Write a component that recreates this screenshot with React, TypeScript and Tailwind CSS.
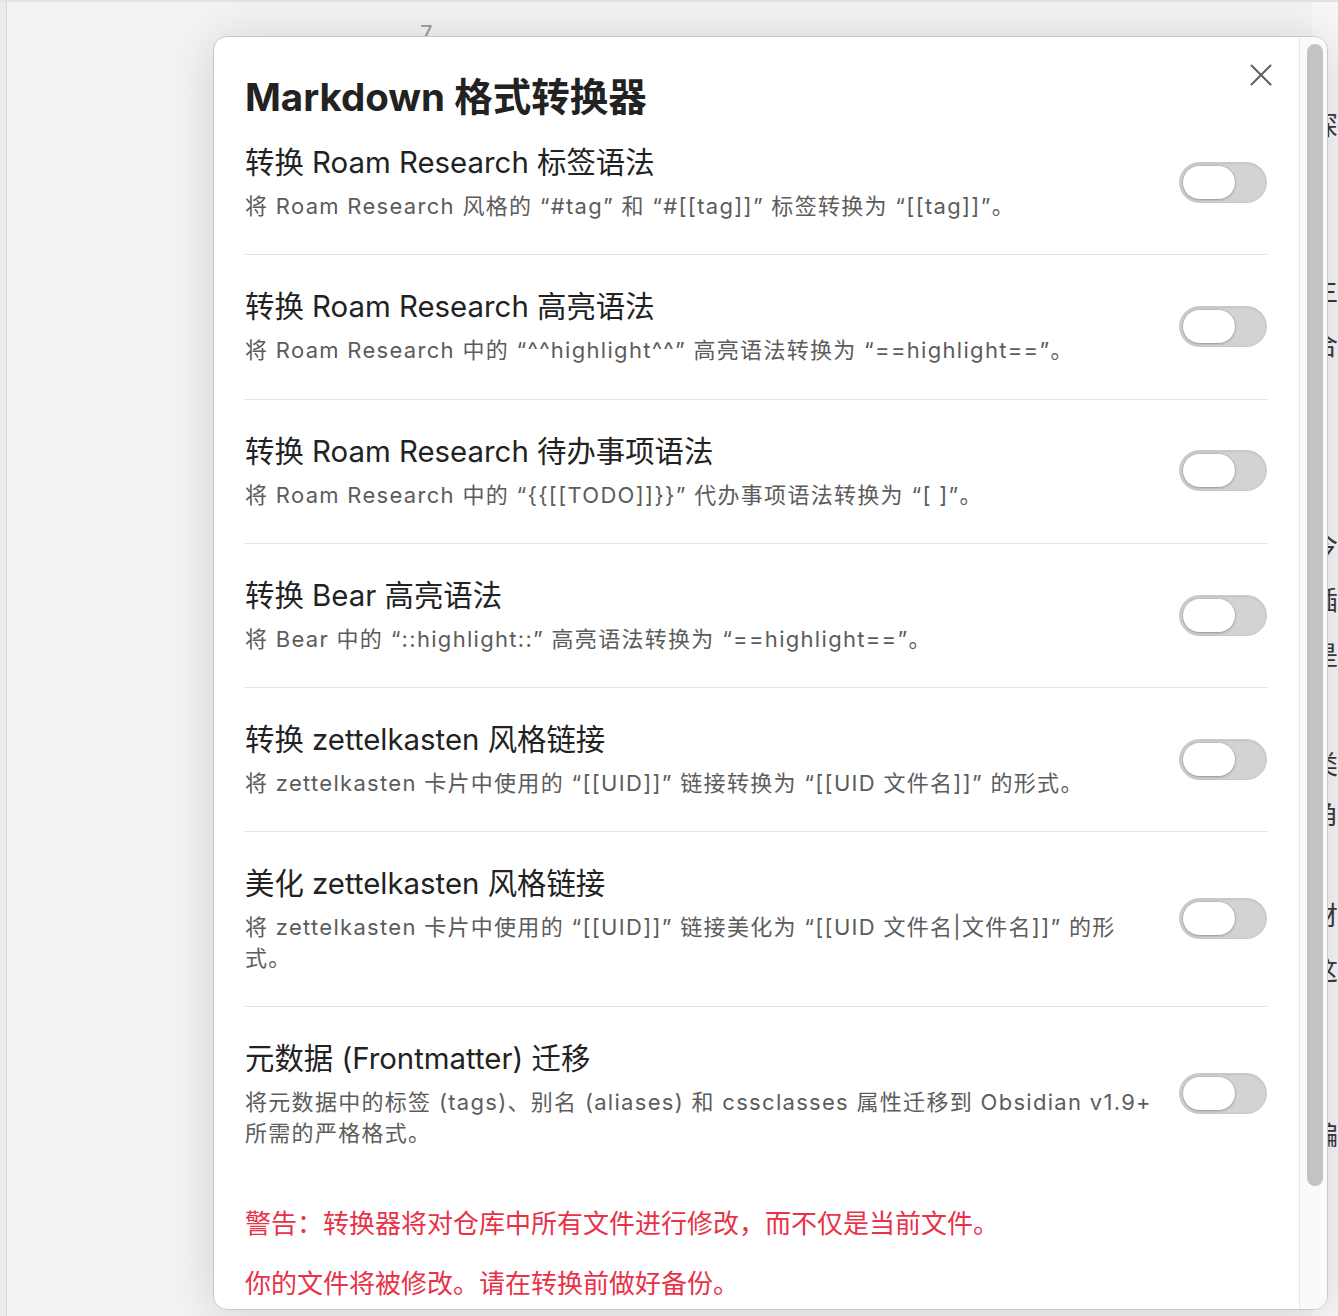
import React from "react";

const rows: { name: string; desc: string[] }[] = [
  { name: "转换 Roam Research 标签语法", desc: ["将 Roam Research 风格的 “#tag” 和 “#[[tag]]” 标签转换为 “[[tag]]”。"] },
  { name: "转换 Roam Research 高亮语法", desc: ["将 Roam Research 中的 “^^highlight^^” 高亮语法转换为 “==highlight==”。"] },
  { name: "转换 Roam Research 待办事项语法", desc: ["将 Roam Research 中的 “{{[[TODO]]}}” 代办事项语法转换为 “[ ]”。"] },
  { name: "转换 Bear 高亮语法", desc: ["将 Bear 中的 “::highlight::” 高亮语法转换为 “==highlight==”。"] },
  { name: "转换 zettelkasten 风格链接", desc: ["将 zettelkasten 卡片中使用的 “[[UID]]” 链接转换为 “[[UID 文件名]]” 的形式。"] },
  { name: "美化 zettelkasten 风格链接", desc: ["将 zettelkasten 卡片中使用的 “[[UID]]” 链接美化为 “[[UID 文件名|文件名]]” 的形", "式。"] },
  { name: "元数据 (Frontmatter) 迁移", desc: ["将元数据中的标签 (tags)、别名 (aliases) 和 cssclasses 属性迁移到 Obsidian v1.9+", "所需的严格格式。"] },
];

function Toggle() {
  return (
    <div className="shrink-0 w-[88px] h-[41px] rounded-full bg-[#d3d3d3] border border-[#c9c9c9] shadow-[inset_0_1px_2px_rgba(0,0,0,0.08)] flex items-center pl-[3px]">
      <div className="w-[52px] h-[33px] rounded-full bg-white shadow-[0_0_0_1px_rgba(0,0,0,0.06),0_1px_3px_rgba(0,0,0,0.25)]" />
    </div>
  );
}

export default function App() {
  return (
    <div className="relative w-[1338px] h-[1316px] overflow-hidden bg-[#f3f3f3] font-[Inter,'Noto_Sans_CJK_SC',sans-serif]">
      {/* background page */}
      <div className="flex h-full border-t-2 border-[#e2e2e2]">
        <div className="w-[7px] h-full bg-[#ebebeb] border-r border-[#d6d6d6]" />
        <div className="w-[1324px] h-full">
          <div className="mt-[20px] ml-[413px] text-[22px] leading-[22px] text-[#9a9a9a]">7</div>
        </div>
        <div className="flex-1 bg-[#f7f7f7] text-[26px] text-[#3a3a3a] whitespace-nowrap">
          <div className="mt-[96px] h-[55px] leading-[55px]">深</div>
          <div className="mt-[110px] h-[55px] leading-[55px]">主</div>
          <div className="h-[55px] leading-[55px]">合</div>
          <div className="mt-[145px] h-[55px] leading-[55px]">今</div>
          <div className="h-[55px] leading-[55px]">插</div>
          <div className="h-[55px] leading-[55px]">是</div>
          <div className="mt-[57px] h-[50px] leading-[50px]">类</div>
          <div className="h-[50px] leading-[50px]">角</div>
          <div className="mt-[48px] h-[55px] leading-[55px]">财</div>
          <div className="h-[55px] leading-[55px]">这</div>
          <div className="h-[55px] leading-[55px]">R</div>
          <div className="mt-[55px] h-[55px] leading-[55px]">编</div>
          <div className="mt-[55px] h-[55px] leading-[55px] font-bold">r</div>
        </div>
      </div>

      {/* modal */}
      <div className="absolute left-[213px] top-[36px] w-[1115px] h-[1274px] rounded-[14px] bg-white border border-[#c9c9c9] shadow-[0_4px_50px_rgba(0,0,0,0.14)] overflow-hidden flex">
        <div className="relative flex-1 overflow-hidden pl-[31px] pr-[32px] pt-[36px]">
          <button className="absolute left-[1036px] top-[27px] w-[22px] h-[22px] text-[#5f5f5f]">
            <svg viewBox="0 0 22 22" width="22" height="22" fill="none" stroke="currentColor" strokeWidth="2" strokeLinecap="round">
              <path d="M1.5 1.5 L20.5 20.5 M20.5 1.5 L1.5 20.5" />
            </svg>
          </button>
          <h1 className="text-[38.5px] leading-[48px] font-bold text-[#222222] mb-[22px]">Markdown 格式转换器</h1>
          {rows.map((r, i) => (
            <div
              key={i}
              className={
                "flex items-center " +
                (i === 0
                  ? "pt-0 pb-[32.75px] border-b border-[#e3e3e3]"
                  : i === rows.length - 1
                  ? "pt-[32px] pb-[32.75px]"
                  : "pt-[32px] pb-[32.75px] border-b border-[#e3e3e3]")
              }
            >
              <div className="flex-1 min-w-0 pr-[28px]">
                <div className="text-[29.4px] leading-[40px] text-[#222222] whitespace-nowrap">{r.name}</div>
                <div className="mt-[8px] text-[22px] leading-[30.5px] tracking-[1.3px] text-[#5c5c5c]">
                  {r.desc.map((d, j) => (
                    <div key={j} className="whitespace-nowrap">{d}</div>
                  ))}
                </div>
              </div>
              <Toggle />
            </div>
          ))}
          <p className="mt-[25px] text-[26px] leading-[36px] text-[#e93147] whitespace-nowrap">警告：转换器将对仓库中所有文件进行修改，而不仅是当前文件。</p>
          <p className="mt-[24px] text-[26px] leading-[36px] text-[#e93147] whitespace-nowrap">你的文件将被修改。请在转换前做好备份。</p>
        </div>
        <div className="w-[28px] h-full bg-[#fafafa] border-l border-[#e8e8e8] pl-[7px] pt-[7px]">
          <div className="w-[16px] h-[1142px] rounded-full bg-[#c3c3c3]" />
        </div>
      </div>
    </div>
  );
}
